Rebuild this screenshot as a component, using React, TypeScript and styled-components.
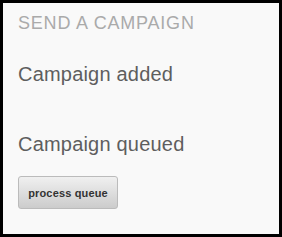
import React from "react";
import styled, { createGlobalStyle } from "styled-components";

const GlobalStyle = createGlobalStyle`
  html, body {
    margin: 0;
    padding: 0;
    background: #000000;
  }
`;

const Panel = styled.div`
  box-sizing: border-box;
  width: 282px;
  height: 237px;
  border: 3px solid #000000;
  background: #f9f9f9;
  padding: 11px 15px 0 15px;
  font-family: "Liberation Sans", Arial, sans-serif;
`;

const Title = styled.h1`
  margin: 0;
  font-size: 18px;
  line-height: 18px;
  font-weight: 400;
  letter-spacing: 0.8px;
  color: #aaaaaa;
`;

const Message = styled.p<{ $gap: number }>`
  margin: ${(p) => p.$gap}px 0 0 0;
  font-size: 20px;
  line-height: 20px;
  font-weight: 400;
  letter-spacing: 0.2px;
  color: #5e5e5e;
`;

const Button = styled.button`
  display: block;
  margin-top: 22px;
  width: 100px;
  height: 33px;
  padding: 0;
  border: 1px solid #bbbbbb;
  border-radius: 3px;
  background: linear-gradient(#f0f0f0, #cccccc);
  font-family: "Liberation Sans", Arial, sans-serif;
  font-size: 11px;
  font-weight: 700;
  letter-spacing: 0.15px;
  color: #333333;
  cursor: pointer;
`;

export default function App() {
  return (
    <>
      <GlobalStyle />
      <Panel>
        <Title>SEND A CAMPAIGN</Title>
        <Message $gap={32}>Campaign added</Message>
        <Message $gap={50}>Campaign queued</Message>
        <Button>process queue</Button>
      </Panel>
    </>
  );
}
